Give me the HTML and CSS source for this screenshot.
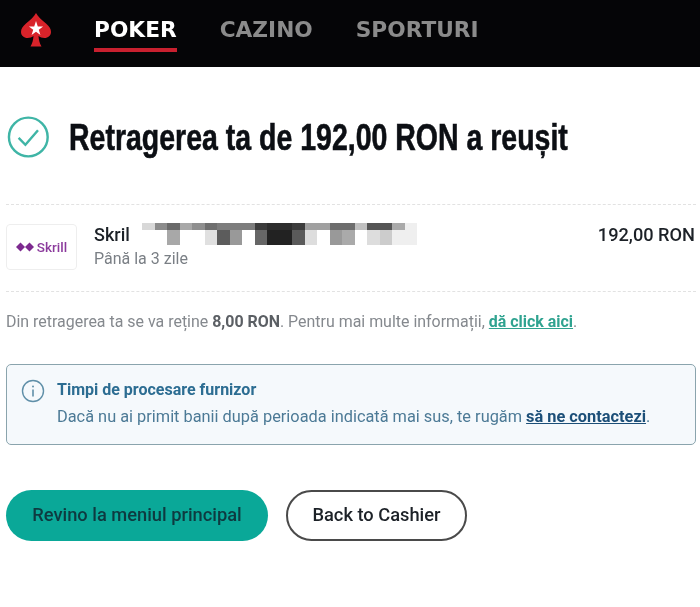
FILE: index.html
```html
<!DOCTYPE html>
<html lang="ro">
<head>
    <meta charset="UTF-8">
    <meta name="viewport" content="width=device-width, initial-scale=1.0">
    <title>Retragere - PokerStars</title>
    <link rel="stylesheet" href="styles.css">
</head>
<body>
    <header class="topbar">
        <svg class="brand" viewBox="0 0 30 34" width="30" height="34">
            <path fill="#d8232a" d="M15 0C17 4 21 7 25 10.500C28.500 13.500 30 16 30 19C30 22.500 27 25 23.500 25C21 25 19 24.300 17.500 23C17.800 27 18.500 30 20.500 33.500L9.500 33.500C11.500 30 12.200 27 12.500 23C11 24.300 9 25 6.500 25C3 25 0 22.500 0 19C0 16 1.500 13.500 5 10.500C9 7 13 4 15 0Z"/>
            <path fill="#fff" d="M15 8L16.800 13.400L22.100 13.400L17.800 16.700L19.400 22L15 18.800L10.600 22L12.200 16.700L7.900 13.400L13.200 13.400Z"/>
        </svg>
        <nav class="nav">
            <a class="nav-item active" href="#">POKER</a>
            <a class="nav-item" href="#">CAZINO</a>
            <a class="nav-item" href="#">SPORTURI</a>
        </nav>
    </header>

    <main class="content">
        <div class="title-row">
            <svg class="check" viewBox="0 0 44 44" width="44" height="44">
                <circle cx="22" cy="22" r="20" fill="none" stroke="#3fb5a6" stroke-width="2.500"/>
                <path d="M12 23L19 30L32 15" fill="none" stroke="#3fb5a6" stroke-width="2.500"/>
            </svg>
            <h1>Retragerea ta de 192,00 RON a reușit</h1>
        </div>

        <div class="method">
            <div class="method-logo">
                <svg viewBox="0 0 18 10" width="18" height="10">
                    <path fill="#7d2a8f" d="M4.500 0.500L9 5L4.500 9.500L0 5Z"/>
                    <path fill="#7d2a8f" d="M13.500 0.500L18 5L13.500 9.500L9 5Z"/>
                </svg>
                <span>Skrill</span>
            </div>
            <div class="method-info">
                <div class="method-name">
                    <span>Skril</span>
                    <svg class="mosaic" viewBox="0 0 22 3" width="275" height="22" preserveAspectRatio="none" shape-rendering="crispEdges">
                        <rect x="0" y="0" width="1" height="1" fill="#d8d8d8"/>
                        <rect x="1" y="0" width="1" height="1" fill="#8c8c8c"/>
                        <rect x="2" y="0" width="1" height="1" fill="#6a6a6a"/>
                        <rect x="3" y="0" width="1" height="1" fill="#a8a8a8"/>
                        <rect x="4" y="0" width="1" height="1" fill="#8f8f8f"/>
                        <rect x="5" y="0" width="1" height="1" fill="#6f6f6f"/>
                        <rect x="6" y="0" width="3" height="1" fill="#7d7d7d"/>
                        <rect x="9" y="0" width="1" height="1" fill="#3c3c3c"/>
                        <rect x="10" y="0" width="2" height="1" fill="#2e2e2e"/>
                        <rect x="12" y="0" width="1" height="1" fill="#3c3c3c"/>
                        <rect x="13" y="0" width="2" height="1" fill="#a0a0a0"/>
                        <rect x="15" y="0" width="2" height="1" fill="#6d6d6d"/>
                        <rect x="17" y="0" width="1" height="1" fill="#c0c0c0"/>
                        <rect x="18" y="0" width="2" height="1" fill="#555"/>
                        <rect x="20" y="0" width="1" height="1" fill="#aaa"/>
                        <rect x="21" y="0" width="1" height="3" fill="#efefef"/>
                        <rect x="2" y="1" width="1" height="2" fill="#a8a8a8"/>
                        <rect x="5" y="1" width="1" height="2" fill="#e0e0e0"/>
                        <rect x="6" y="1" width="1" height="2" fill="#5c5c5c"/>
                        <rect x="7" y="1" width="1" height="2" fill="#999"/>
                        <rect x="9" y="1" width="1" height="2" fill="#666"/>
                        <rect x="10" y="1" width="2" height="2" fill="#222"/>
                        <rect x="12" y="1" width="1" height="2" fill="#5a5a5a"/>
                        <rect x="13" y="1" width="1" height="2" fill="#ddd"/>
                        <rect x="15" y="1" width="1" height="2" fill="#999"/>
                        <rect x="16" y="1" width="1" height="2" fill="#aaa"/>
                        <rect x="18" y="1" width="1" height="2" fill="#ddd"/>
                        <rect x="19" y="1" width="1" height="2" fill="#ccc"/>
                        <rect x="20" y="1" width="1" height="2" fill="#efefef"/>
                    </svg>
                </div>
                <div class="method-time">Până la 3 zile</div>
            </div>
            <div class="method-amount">192,00 RON</div>
        </div>

        <p class="fee">Din retragerea ta se va reține <strong>8,00 RON</strong>. Pentru mai multe informații, <a href="#">dă click aici</a>.</p>

        <div class="notice">
            <svg class="notice-icon" viewBox="0 0 24 24" width="24" height="24">
                <circle cx="12" cy="12" r="10.500" fill="none" stroke="#5f8fa8" stroke-width="1.400"/>
                <path d="M12 10.500V17.500" stroke="#5f8fa8" stroke-width="1.600"/>
                <circle cx="12" cy="7.500" r="1" fill="#5f8fa8"/>
            </svg>
            <div>
                <div class="notice-title">Timpi de procesare furnizor</div>
                <div class="notice-text">Dacă nu ai primit banii după perioada indicată mai sus, te rugăm <a href="#">să ne contactezi</a>.</div>
            </div>
        </div>

        <div class="actions">
            <a class="btn btn-primary" href="#">Revino la meniul principal</a>
            <a class="btn btn-outline" href="#">Back to Cashier</a>
        </div>
    </main>
</body>
</html>
```

FILE: styles.css
```css
* {
    margin: 0;
    padding: 0;
    box-sizing: border-box;
}

body {
    font-family: Roboto, sans-serif;
    background: #fff;
    color: #1c2127;
    filter: blur(0.4px);
}

a {
    color: inherit;
}

.topbar {
    height: 67px;
    background: #050507;
    display: flex;
    align-items: flex-start;
    padding: 13px 0 0 21px;
}

.nav {
    display: flex;
    gap: 43px;
    margin-left: 43px;
}

.nav-item {
    font-family: "DejaVu Sans", sans-serif;
    font-size: 21.700px;
    font-weight: 700;
    line-height: 33px;
    height: 39px;
    color: #8b8b8b;
    text-decoration: none;
}

.nav-item.active {
    color: #fff;
    border-bottom: 4px solid #c8202f;
}

.content {
    padding: 48px 4px 0 6px;
}

.title-row {
    display: flex;
    align-items: center;
    gap: 19px;
    padding-left: 1px;
    padding-bottom: 45px;
    border-bottom: 1px dashed #e2e2e2;
}

h1 {
    font-family: "Liberation Sans", sans-serif;
    font-size: 37px;
    font-weight: 700;
    line-height: 44px;
    color: #0c0f14;
    white-space: nowrap;
    min-width: 0;
    -webkit-text-stroke: 0.6px #0c0f14;
    transform: translateY(1px) scaleX(0.77);
    transform-origin: left center;
}

.method {
    display: flex;
    align-items: flex-start;
    padding: 19px 0 21px;
    border-bottom: 1px dashed #e2e2e2;
}

.method-logo {
    width: 71px;
    height: 46px;
    border: 1px solid #eee;
    border-radius: 4px;
    display: flex;
    align-items: center;
    justify-content: center;
    gap: 3px;
    color: #8b3a9c;
    font-size: 13.500px;
    font-weight: 500;
}

.method-info {
    flex: 1;
    margin-left: 17px;
}

.method-name {
    display: flex;
    font-size: 18px;
    font-weight: 500;
    line-height: 21px;
}

.mosaic {
    margin: -1px 0 0 12px;
}

.method-time {
    font-size: 16px;
    line-height: 20px;
    margin-top: 4px;
    color: #7a7f85;
}

.method-amount {
    font-size: 18.200px;
    font-weight: 500;
    line-height: 21px;
    margin-right: 1px;
}

.fee {
    font-size: 15.950px;
    line-height: 20px;
    margin-top: 20px;
    color: #85898e;
    white-space: nowrap;
}

.fee strong {
    color: #5b5f64;
}

.fee a {
    color: #2fa390;
    font-weight: 700;
}

.notice {
    display: flex;
    gap: 12px;
    height: 81px;
    margin-top: 32px;
    padding: 14px;
    background: #f5f9fc;
    border: 1px solid #8aa4ad;
    border-radius: 5px;
}

.notice-icon {
    flex-shrink: 0;
}

.notice-title {
    font-size: 16px;
    font-weight: 700;
    line-height: 22px;
    color: #2c6d92;
}

.notice-text {
    font-size: 16.350px;
    line-height: 20px;
    margin-top: 6px;
    color: #4c7a96;
    white-space: nowrap;
}

.notice-text a {
    color: #1c4f78;
    font-weight: 700;
}

.actions {
    display: flex;
    gap: 18px;
    margin-top: 45px;
}

.btn {
    height: 51px;
    border-radius: 26px;
    display: flex;
    align-items: center;
    justify-content: center;
    padding-bottom: 2px;
    font-size: 18.300px;
    font-weight: 500;
    text-decoration: none;
}

.btn-primary {
    width: 262px;
    background: #0aa898;
    color: #0e3a40;
}

.btn-outline {
    width: 181px;
    background: #fff;
    border: 2px solid #4a4a4a;
    color: #1c2127;
}
```
